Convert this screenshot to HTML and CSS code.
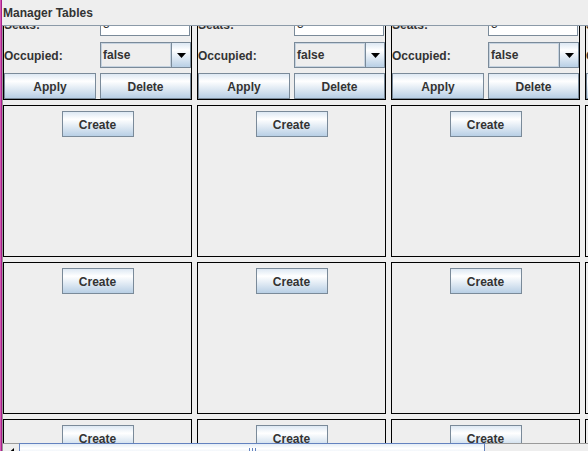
FILE: index.html
```html
<!DOCTYPE html>
<html lang="en">
<head>
    <meta charset="UTF-8">
    <title>Manager Tables</title>
    <link rel="stylesheet" href="styles.css">
</head>
<body>
    <div class="edge"></div>
    <div class="frame">
        <div class="title">Manager Tables</div>
        <div class="pane">
            <div class="viewport">
                <div class="grid">
                    <!-- occupied tables -->
                    <div class="cell form">
                        <div class="spacer"></div>
                        <div class="label">Seats:</div>
                        <div class="field">5</div>
                        <div class="label">Occupied:</div>
                        <div class="combo"><span class="combo-value">false</span><span class="combo-arrow"><svg width="9" height="5" viewBox="0 0 9 5"><polygon points="0,0 9,0 4.5,5" fill="#000"/></svg></span></div>
                        <button class="button">Apply</button>
                        <button class="button">Delete</button>
                    </div>
                    <div class="cell form">
                        <div class="spacer"></div>
                        <div class="label">Seats:</div>
                        <div class="field">5</div>
                        <div class="label">Occupied:</div>
                        <div class="combo"><span class="combo-value">false</span><span class="combo-arrow"><svg width="9" height="5" viewBox="0 0 9 5"><polygon points="0,0 9,0 4.5,5" fill="#000"/></svg></span></div>
                        <button class="button">Apply</button>
                        <button class="button">Delete</button>
                    </div>
                    <div class="cell form">
                        <div class="spacer"></div>
                        <div class="label">Seats:</div>
                        <div class="field">5</div>
                        <div class="label">Occupied:</div>
                        <div class="combo"><span class="combo-value">false</span><span class="combo-arrow"><svg width="9" height="5" viewBox="0 0 9 5"><polygon points="0,0 9,0 4.5,5" fill="#000"/></svg></span></div>
                        <button class="button">Apply</button>
                        <button class="button">Delete</button>
                    </div>
                    <div class="cell form">
                        <div class="spacer"></div>
                        <div class="label">Seats:</div>
                        <div class="field">5</div>
                        <div class="label">Occupied:</div>
                        <div class="combo"><span class="combo-value">false</span><span class="combo-arrow"><svg width="9" height="5" viewBox="0 0 9 5"><polygon points="0,0 9,0 4.5,5" fill="#000"/></svg></span></div>
                        <button class="button">Apply</button>
                        <button class="button">Delete</button>
                    </div>

                    <!-- empty slots -->
                    <div class="cell"><button class="button create">Create</button></div>
                    <div class="cell"><button class="button create">Create</button></div>
                    <div class="cell"><button class="button create">Create</button></div>
                    <div class="cell"><button class="button create">Create</button></div>

                    <div class="cell"><button class="button create">Create</button></div>
                    <div class="cell"><button class="button create">Create</button></div>
                    <div class="cell"><button class="button create">Create</button></div>
                    <div class="cell"><button class="button create">Create</button></div>

                    <div class="cell"><button class="button create">Create</button></div>
                    <div class="cell"><button class="button create">Create</button></div>
                    <div class="cell"><button class="button create">Create</button></div>
                    <div class="cell"><button class="button create">Create</button></div>
                </div>
            </div>
            <div class="hbar">
                <div class="hbar-arrow"><svg width="5" height="9" viewBox="0 0 5 9"><polygon points="5,0 5,9 0,4.5" fill="#000"/></svg></div>
                <div class="thumb"><span class="grip"></span></div>
                <div class="track"></div>
            </div>
        </div>
    </div>
</body>
</html>
```
FILE: styles.css
```css
* {
    box-sizing: border-box;
}
body {
    margin: 0;
    height: 451px;
    overflow: hidden;
    display: flex;
    background: #eeeeee;
    color: #333333;
    font-family: "Liberation Sans", Arial, sans-serif;
    font-size: 12px;
    font-weight: bold;
}
.edge {
    flex: none;
    width: 2px;
    background: linear-gradient(to right, #d45ab4 0 1px, #a8208a 1px 2px);
}
.frame {
    flex: 1;
    min-width: 0;
    display: flex;
    flex-direction: column;
}
.title {
    flex: none;
    height: 25px;
    line-height: 25px;
    padding: 1px 0 0 1px;
}
.pane {
    flex: none;
    height: 435px;
    display: flex;
    flex-direction: column;
    border-top: 1px solid #8b9aa8;
    border-left: 1px solid #9a9a9a;
}
.viewport {
    flex: none;
    height: 417px;
    overflow: hidden;
}

/* Table grid */
.grid {
    display: grid;
    grid-template-columns: repeat(4, 189px);
    grid-auto-rows: 152px;
    gap: 5px;
    margin-top: -78px;
}
.cell {
    border: 1px solid #000;
    background: #eeeeee;
}
.form {
    display: grid;
    grid-template-columns: 92px 91px;
    grid-template-rows: 57px 26px 26px 26px;
    column-gap: 4px;
    row-gap: 5px;
}
.spacer {
    grid-column: span 2;
}
.label {
    padding-top: 1px;
    line-height: 26px;
}
.field {
    background: #fff;
    border: 1px solid #7a8a99;
    margin: 0 1px 1px 0;
    padding: 1px 0 0 2px;
    line-height: 22px;
    font-weight: normal;
}
.combo {
    display: flex;
    border: 1px solid #7a8a99;
}
.combo-value {
    flex: 1;
    padding: 1px 0 0 2px;
    line-height: 23px;
    box-shadow: inset 0 0 0 1px #c6d3e0;
}
.combo-arrow {
    width: 19px;
    display: flex;
    align-items: center;
    justify-content: center;
    border-left: 1px solid #7a8a99;
    background: linear-gradient(#dde8f3, #ffffff 30%, #b8cfe5);
}
.button {
    padding: 2px 0 0;
    border: 1px solid #7a8a99;
    background: linear-gradient(#dde8f3, #ffffff 30%, #b8cfe5);
    color: #333333;
    font: inherit;
}
.create {
    display: block;
    width: 72px;
    height: 26px;
    margin: 5px auto 0;
}

/* Horizontal scrollbar */
.hbar {
    flex: none;
    height: 17px;
    display: flex;
}
.hbar-arrow {
    width: 16px;
    display: flex;
    align-items: center;
    justify-content: center;
    border-top: 1px solid #9a9a9a;
    background: #eeeeee;
}
.thumb {
    width: 466px;
    display: flex;
    align-items: center;
    justify-content: center;
    border: 1px solid #6382bf;
    background: linear-gradient(#e4edf6, #ffffff 30%, #c8daeb);
}
.grip {
    width: 7px;
    height: 8px;
    background: repeating-linear-gradient(to right, #6382bf 0 1px, transparent 1px 3px);
}
.track {
    flex: 1;
    border-top: 1px solid #9a9a9a;
    background: #eeeeee;
}
```
